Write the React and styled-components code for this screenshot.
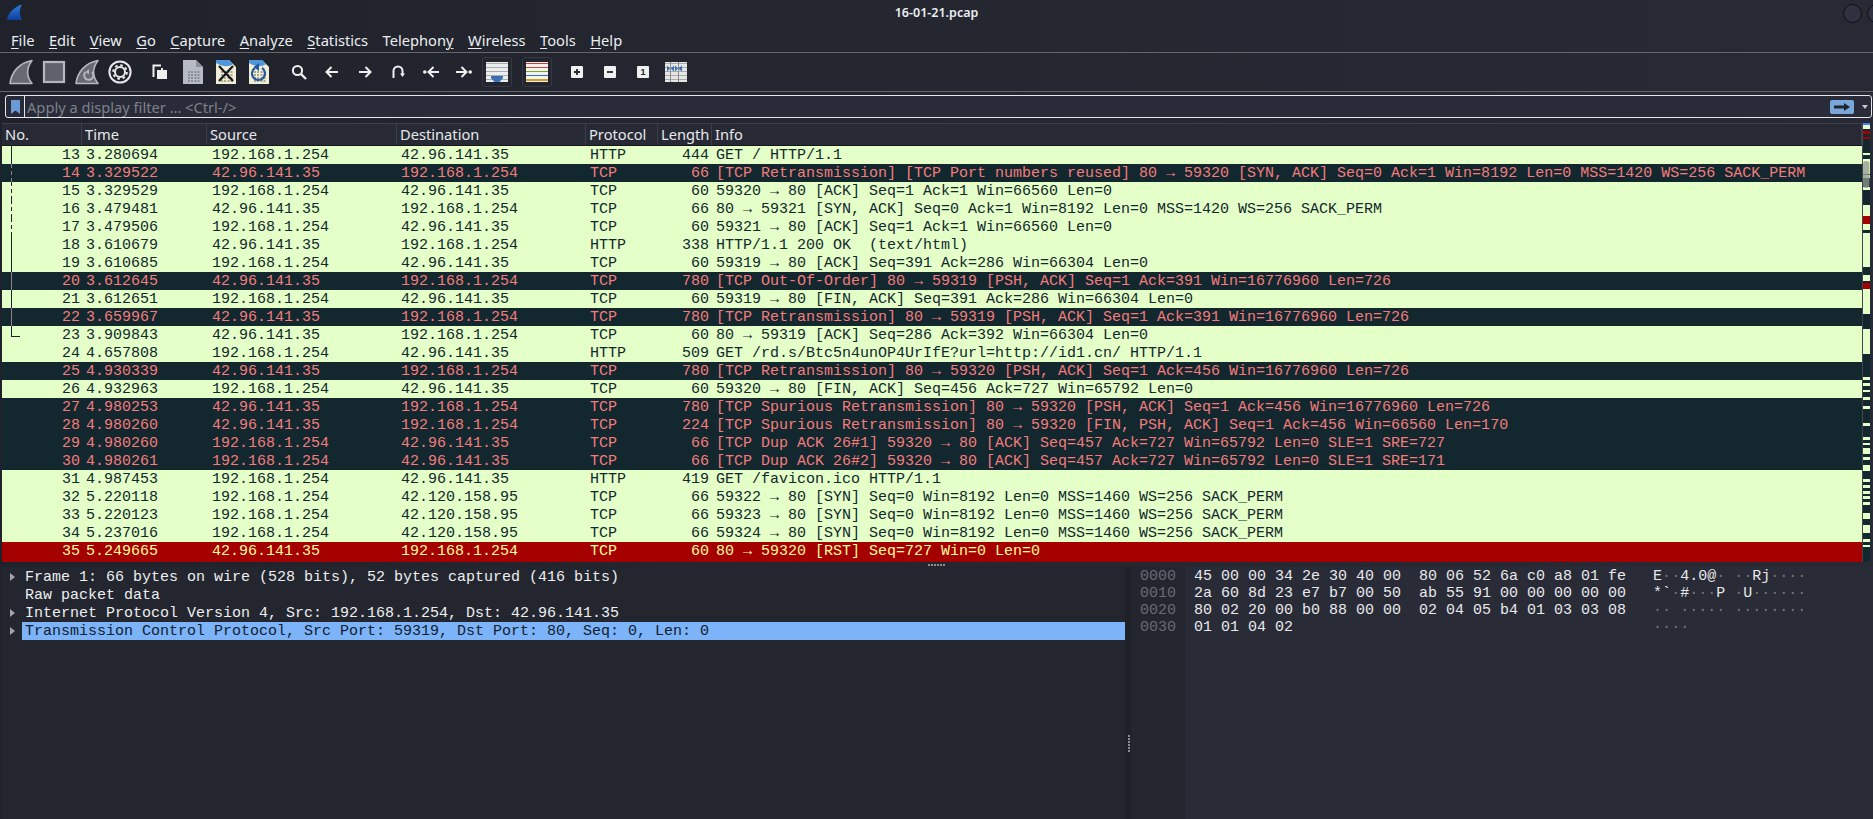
import React from 'react';
import styled, { createGlobalStyle } from 'styled-components';

const MONO = `'Liberation Mono', monospace`;
const UI = `'Noto Sans', sans-serif`;
const COLS = '80px 125px 190px 189px 72px 54px 1fr';

const A = '192.168.1.254';
const B = '42.96.141.35';
const C = '42.120.158.95';

const packets = [
    [13, '3.280694', A, B, 'HTTP', 444, 'GET / HTTP/1.1', 'ok', 'first'],
    [14, '3.329522', B, A, 'TCP', 66, '[TCP Retransmission] [TCP Port numbers reused] 80 → 59320 [SYN, ACK] Seq=0 Ack=1 Win=8192 Len=0 MSS=1420 WS=256 SACK_PERM', 'bad', 'dash'],
    [15, '3.329529', A, B, 'TCP', 60, '59320 → 80 [ACK] Seq=1 Ack=1 Win=66560 Len=0', 'ok', 'dash'],
    [16, '3.479481', B, A, 'TCP', 66, '80 → 59321 [SYN, ACK] Seq=0 Ack=1 Win=8192 Len=0 MSS=1420 WS=256 SACK_PERM', 'ok', 'dash'],
    [17, '3.479506', A, B, 'TCP', 60, '59321 → 80 [ACK] Seq=1 Ack=1 Win=66560 Len=0', 'ok', 'dash'],
    [18, '3.610679', B, A, 'HTTP', 338, 'HTTP/1.1 200 OK  (text/html)', 'ok', 'line'],
    [19, '3.610685', A, B, 'TCP', 60, '59319 → 80 [ACK] Seq=391 Ack=286 Win=66304 Len=0', 'ok', 'line'],
    [20, '3.612645', B, A, 'TCP', 780, '[TCP Out-Of-Order] 80 → 59319 [PSH, ACK] Seq=1 Ack=391 Win=16776960 Len=726', 'bad', 'line'],
    [21, '3.612651', A, B, 'TCP', 60, '59319 → 80 [FIN, ACK] Seq=391 Ack=286 Win=66304 Len=0', 'ok', 'line'],
    [22, '3.659967', B, A, 'TCP', 780, '[TCP Retransmission] 80 → 59319 [PSH, ACK] Seq=1 Ack=391 Win=16776960 Len=726', 'bad', 'line'],
    [23, '3.909843', B, A, 'TCP', 60, '80 → 59319 [ACK] Seq=286 Ack=392 Win=66304 Len=0', 'ok', 'last'],
    [24, '4.657808', A, B, 'HTTP', 509, 'GET /rd.s/Btc5n4unOP4UrIfE?url=http://id1.cn/ HTTP/1.1', 'ok'],
    [25, '4.930339', B, A, 'TCP', 780, '[TCP Retransmission] 80 → 59320 [PSH, ACK] Seq=1 Ack=456 Win=16776960 Len=726', 'bad'],
    [26, '4.932963', A, B, 'TCP', 60, '59320 → 80 [FIN, ACK] Seq=456 Ack=727 Win=65792 Len=0', 'ok'],
    [27, '4.980253', B, A, 'TCP', 780, '[TCP Spurious Retransmission] 80 → 59320 [PSH, ACK] Seq=1 Ack=456 Win=16776960 Len=726', 'bad'],
    [28, '4.980260', B, A, 'TCP', 224, '[TCP Spurious Retransmission] 80 → 59320 [FIN, PSH, ACK] Seq=1 Ack=456 Win=66560 Len=170', 'bad'],
    [29, '4.980260', A, B, 'TCP', 66, '[TCP Dup ACK 26#1] 59320 → 80 [ACK] Seq=457 Ack=727 Win=65792 Len=0 SLE=1 SRE=727', 'bad'],
    [30, '4.980261', A, B, 'TCP', 66, '[TCP Dup ACK 26#2] 59320 → 80 [ACK] Seq=457 Ack=727 Win=65792 Len=0 SLE=1 SRE=171', 'bad'],
    [31, '4.987453', A, B, 'HTTP', 419, 'GET /favicon.ico HTTP/1.1', 'ok'],
    [32, '5.220118', A, C, 'TCP', 66, '59322 → 80 [SYN] Seq=0 Win=8192 Len=0 MSS=1460 WS=256 SACK_PERM', 'ok'],
    [33, '5.220123', A, C, 'TCP', 66, '59323 → 80 [SYN] Seq=0 Win=8192 Len=0 MSS=1460 WS=256 SACK_PERM', 'ok'],
    [34, '5.237016', A, C, 'TCP', 66, '59324 → 80 [SYN] Seq=0 Win=8192 Len=0 MSS=1460 WS=256 SACK_PERM', 'ok'],
    [35, '5.249665', B, A, 'TCP', 60, '80 → 59320 [RST] Seq=727 Win=0 Len=0', 'rst'],
];

const hexLines = [
    ['0000', '45 00 00 34 2e 30 40 00  80 06 52 6a c0 a8 01 fe', 'E··4.0@· ··Rj····'],
    ['0010', '2a 60 8d 23 e7 b7 00 50  ab 55 91 00 00 00 00 00', '*`·#···P ·U······'],
    ['0020', '80 02 20 00 b0 88 00 00  02 04 05 b4 01 03 03 08', '·· ····· ········'],
    ['0030', '01 01 04 02', '····'],
];

const tree = [
    { text: 'Frame 1: 66 bytes on wire (528 bits), 52 bytes captured (416 bits)', arrow: true },
    { text: 'Raw packet data' },
    { text: 'Internet Protocol Version 4, Src: 192.168.1.254, Dst: 42.96.141.35', arrow: true },
    { text: 'Transmission Control Protocol, Src Port: 59319, Dst Port: 80, Seq: 0, Len: 0', arrow: true, selected: true },
];

const menus = [
    ['', 'F', 'ile'], ['', 'E', 'dit'], ['', 'V', 'iew'], ['', 'G', 'o'], ['', 'C', 'apture'], ['', 'A', 'nalyze'],
    ['', 'S', 'tatistics'], ['Telephon', 'y', ''], ['', 'W', 'ireless'], ['', 'T', 'ools'], ['', 'H', 'elp'],
];

// light stretches and red marks of the scroll map, in px from the top of the bar
const mapLight = [[2, 4], [30, 2], [36, 15], [52, 3], [64, 3], [82, 11], [101, 6], [110, 34], [152, 6], [162, 29],
    [206, 25], [254, 3], [260, 3], [267, 2], [274, 3], [283, 3], [300, 3], [314, 3], [320, 2], [325, 6], [334, 3], [342, 6],
    [356, 3], [362, 3], [368, 3], [373, 3], [379, 3], [390, 6], [402, 8], [416, 3], [422, 2]];
const mapRed = [[8, 3], [14, 2], [93, 8], [160, 6]];

const GlobalStyle = createGlobalStyle`
    html, body {
        margin: 0;
        padding: 0;
        background: #22252d;
    }
`;

const Page = styled.div`
    display: flex;
    flex-direction: column;
    width: 100%;
    height: 100vh;
    overflow: hidden;
    color: #eceef2;
    font-family: ${UI};
    background: linear-gradient(90deg, #1f222a 0%, #23262e 35%, #272a35 100%);
`;

const TitleBar = styled.div`
    position: relative;
    display: flex;
    align-items: center;
    justify-content: center;
    height: 30px;
    padding-bottom: 6px;
    box-sizing: border-box;
    font-size: 12.5px;
    font-weight: 600;
`;

const Logo = styled.svg`
    position: absolute;
    left: 6px;
    top: 4px;
`;

const WindowButton = styled.span`
    position: absolute;
    top: 4px;
    left: ${(p) => p.$left}px;
    width: 17px;
    height: 17px;
    border-radius: 50%;
    background: #2e3240;
    border: 1px solid #0d0e12;
`;

const MenuBar = styled.div`
    display: flex;
    height: 19px;
    padding: 0 0 3px 4px;
    align-items: center;
    border-bottom: 1px solid #66676e;
`;

const MenuItem = styled.span`
    padding: 0 7px;
    margin-right: 0.5px;
    font-size: 14.67px;
    line-height: 20px;

    u {
        text-underline-offset: 2px;
        text-decoration-thickness: 1px;
    }
`;

const Toolbar = styled.div`
    display: flex;
    align-items: center;
    height: 38px;
    padding-left: 4.5px;
    border-bottom: 1px solid #66676e;
`;

const ToolButton = styled.div`
    display: flex;
    align-items: center;
    justify-content: center;
    width: 33px;
    height: 38px;
    flex: none;
`;

const CheckedBox = styled.div`
    display: flex;
    align-items: center;
    justify-content: center;
    width: 28px;
    height: 28px;
    border: 1px solid #363945;
    border-radius: 3px;
    background: #23262f;
`;

const ToolSep = styled.div`
    width: 7px;
    flex: none;
`;

const FilterRow = styled.div`
    padding: 3px 1px 5px 5px;
`;

const FilterBox = styled.div`
    display: flex;
    align-items: center;
    height: 23px;
    box-sizing: border-box;
    border: 1.5px solid #e6e7ea;
    border-radius: 3px;
    background: #292c38;
`;

const Bookmark = styled.div`
    display: flex;
    align-items: center;
    justify-content: center;
    width: 18px;
    height: 100%;
    border-right: 1px solid #e6e7ea;
`;

const FilterInput = styled.div`
    flex: 1;
    padding-left: 2px;
    font-size: 14.67px;
    line-height: 20px;
    color: #7e818a;
`;

const ApplyButton = styled.div`
    display: flex;
    align-items: center;
    justify-content: center;
    width: 24px;
    height: 14px;
    border-radius: 2px;
    background: #7aa7da;
`;

const FilterCaret = styled.div`
    width: 0;
    height: 0;
    margin: 0 3px 0 8px;
    border-left: 3.5px solid transparent;
    border-right: 3.5px solid transparent;
    border-top: 4px solid #c6c7cb;
`;

const TableArea = styled.div`
    display: flex;
    padding-left: 2px;
    height: 439px;
    flex: none;
`;

const PacketList = styled.div`
    width: 1860px;
    flex: none;
`;

const HeaderRow = styled.div`
    display: grid;
    grid-template-columns: ${COLS};
    height: 23px;
    box-sizing: border-box;
    border-top: 1px solid #3c3f49;
    border-bottom: 1px solid #14161b;
    background: #272a35;
`;

const HeaderCell = styled.div`
    padding-left: 3px;
    font-size: 14.67px;
    line-height: 21px;
    color: #e6e8ec;
    border-right: 1px solid #3c3f49;
    white-space: nowrap;
    overflow: hidden;
`;

const rowColors = {
    ok: 'background: #e4ffc7; color: #12272e;',
    bad: 'background: #12272e; color: #f47c7c;',
    rst: 'background: #a40000; color: #fffc9c;',
};

const Row = styled.div`
    display: grid;
    grid-template-columns: ${COLS};
    height: ${(p) => (p.$kind === 'rst' ? 20 : 18)}px;
    font-family: ${MONO};
    font-size: 15px;
    line-height: 19px;
    white-space: pre;
    ${(p) => rowColors[p.$kind]}
`;

const Cell = styled.div`
    padding-left: 4px;
    overflow: hidden;
`;

const SourceCell = styled(Cell)`
    padding-left: 5px;
`;

const NumCell = styled.div`
    position: relative;
    text-align: right;
    padding-right: ${(p) => p.$pad}px;
`;

const threadKinds = {
    first: 'top: 0; bottom: 0; background: currentColor;',
    line: 'top: 0; bottom: 0; background: currentColor;',
    dash: 'top: 0; bottom: 0; background: repeating-linear-gradient(180deg, currentColor 0 4px, transparent 4px 7px);',
    last: 'top: 0; bottom: 8px; background: currentColor;',
};

const Thread = styled.span`
    position: absolute;
    left: 9px;
    width: 1px;
    color: ${(p) => (p.$dim ? '#9a8086' : '#12272e')};
    ${(p) => threadKinds[p.$kind]}
`;

const ThreadHook = styled.span`
    position: absolute;
    left: 9px;
    bottom: 8px;
    width: 9px;
    height: 1px;
    background: #12272e;
`;

const ScrollMap = styled.svg`
    flex: none;
    display: block;
`;

const SplitH = styled.div`
    display: flex;
    justify-content: center;
    height: 5px;
    flex: none;
    padding-top: 1.5px;
    box-sizing: border-box;
`;

const GripDots = styled.span`
    width: ${(p) => (p.$vertical ? 2 : 17)}px;
    height: ${(p) => (p.$vertical ? 17 : 2)}px;
    background: repeating-linear-gradient(
        ${(p) => (p.$vertical ? '180deg' : '90deg')},
        #8a8c92 0 2px,
        transparent 2px 3px
    );
`;

const Panes = styled.div`
    display: flex;
    flex: 1;
    min-height: 0;
    padding-left: 2px;
`;

const DetailPane = styled.div`
    width: 1123px;
    flex: none;
    padding-top: 1px;
    box-sizing: border-box;
    background: #23262e;
`;

const TreeRow = styled.div`
    display: flex;
    align-items: center;
    height: 18px;
`;

const TreeArrow = styled.span`
    width: 20px;
    flex: none;
    display: flex;
    justify-content: center;
    padding-left: 1px;
    box-sizing: border-box;

    &::before {
        content: '';
        visibility: ${(p) => (p.$show ? 'visible' : 'hidden')};
        border-top: 4px solid transparent;
        border-bottom: 4px solid transparent;
        border-left: 5px solid #a2a4a9;
    }
`;

const TreeText = styled.span`
    flex: 1;
    height: 18px;
    padding-left: 3px;
    font-family: ${MONO};
    font-size: 15px;
    line-height: 19px;
    white-space: pre;
    color: ${(p) => (p.$selected ? '#10202e' : '#eceef2')};
    background: ${(p) => (p.$selected ? '#7db3f8' : 'transparent')};
`;

const SplitV = styled.div`
    display: flex;
    align-items: center;
    justify-content: flex-end;
    width: 6px;
    flex: none;
    box-sizing: border-box;
    padding: 100px 1px 0 0;
    background: #1f2128;
`;

const HexPane = styled.div`
    display: flex;
    flex: 1;
    background: #292c37;
`;

const OffsetCol = styled.div`
    width: 54px;
    flex: none;
    padding: 1px 0 0 9px;
    box-sizing: border-box;
    background: #23262e;
`;

const DataCol = styled.div`
    padding: 1px 0 0 9px;
`;

const HexLine = styled.div`
    height: 17px;
    font-family: ${MONO};
    font-size: 15px;
    line-height: 17px;
    white-space: pre;
    color: ${(p) => (p.$muted ? '#686b74' : '#e8e9ec')};
`;

const DimDot = styled.span`
    color: #73767e;
`;

const Fin = ({ children }) => (
    <svg width="24" height="26" viewBox="0 0 24 26">
        <path d="M1 24.5C2.5 13 10 4 23 1.5C17.5 9 17 17 23 24.5Z" fill="#676a73" stroke="#b5b7bc" strokeWidth="1.6" strokeLinejoin="round" />
        {children}
    </svg>
);

const StopIcon = () => (
    <svg width="24" height="24" viewBox="0 0 24 24">
        <rect x="2" y="2" width="20" height="20" fill="#5f626c" stroke="#b5b7bc" strokeWidth="2.2" />
    </svg>
);

const GearIcon = () => (
    <svg width="24" height="24" viewBox="0 0 24 24" fill="none" stroke="#e8e8ea">
        <circle cx="12" cy="12" r="10.6" strokeWidth="2" />
        <circle cx="12" cy="12" r="5" strokeWidth="2" />
        <circle cx="12" cy="12" r="6.8" strokeWidth="2" strokeDasharray="2.6 2.74" />
    </svg>
);

const OpenIcon = () => (
    <svg width="16" height="16" viewBox="0 0 16 16">
        <path d="M1.5 13V1.5H9" fill="none" stroke="#f0f0f0" strokeWidth="2" />
        <path d="M5 6H9V4H11V6H15V15H5Z" fill="#efefef" />
    </svg>
);

const DocBits = ({ color }) => (
    <g fill={color}>
        {[11, 14, 17, 20].map((y) => [5, 8, 11.5, 14.5].map((x) => (
            <rect key={`${x}-${y}`} x={x} y={y} width="2" height="2" />
        )))}
    </g>
);

const FileIcon = () => (
    <svg width="20" height="24" viewBox="0 0 20 24">
        <path d="M0 0H13L20 7V24H0Z" fill="#b7bbc6" />
        <path d="M13 0L20 7H13Z" fill="#8d919c" />
        <DocBits color="#8a8e9a" />
    </svg>
);

const CloseIcon = () => (
    <svg width="20" height="24" viewBox="0 0 20 24">
        <path d="M0 0H13L20 7V24H0Z" fill="#f1eed8" />
        <path d="M0 0H13L17 4C12 8 5 6 0 3Z" fill="#4f96dc" />
        <DocBits color="#a9a88f" />
        <path d="M3 6L17 21M17 6L3 21" stroke="#15161a" strokeWidth="2.2" />
    </svg>
);

const ReloadIcon = () => (
    <svg width="20" height="24" viewBox="0 0 20 24">
        <path d="M0 0H13L20 7V24H0Z" fill="#f1eed8" />
        <path d="M0 0H13L17 4C12 8 5 6 0 3Z" fill="#4f96dc" />
        <DocBits color="#a9a88f" />
        <path d="M6 8A6.5 6.5 0 1 0 13 8" fill="none" stroke="#24579e" strokeWidth="2.2" />
        <path d="M10 3V11L4.5 7Z" fill="#24579e" />
    </svg>
);

const SearchIcon = () => (
    <svg width="16" height="16" viewBox="0 0 16 16" fill="none" stroke="#f0f0f0" strokeWidth="2">
        <circle cx="6.5" cy="6.5" r="4.6" />
        <path d="M10 10L15 15" strokeWidth="2.4" />
    </svg>
);

const Arrow = ({ flip }) => (
    <svg width="14" height="14" viewBox="0 0 14 14" fill="none" stroke="#f0f0f0" strokeWidth="2" style={flip ? { transform: 'scaleX(-1)' } : undefined}>
        <path d="M1 7H12M7.5 2L12.5 7L7.5 12" />
    </svg>
);

const JumpIcon = () => (
    <svg width="14" height="14" viewBox="0 0 14 14" fill="none" stroke="#f0f0f0" strokeWidth="2">
        <path d="M2.5 13V6A4.5 4.5 0 0 1 11.5 6V9" />
        <path d="M9 8.5H14L11.5 12Z" fill="#f0f0f0" stroke="none" />
    </svg>
);

const EdgeIcon = ({ flip }) => (
    <svg width="16" height="14" viewBox="0 0 16 14" fill="none" stroke="#f0f0f0" strokeWidth="2" style={flip ? { transform: 'scaleX(-1)' } : undefined}>
        <path d="M6 7H16M10.5 2L5.5 7L10.5 12" />
        <circle cx="1.8" cy="7" r="1.8" fill="#f0f0f0" stroke="none" />
    </svg>
);

const stripes = [1, 5, 9, 13, 17];

const AutoScrollIcon = () => (
    <svg width="22" height="20" viewBox="0 0 22 20">
        <rect width="22" height="20" fill="#eceded" />
        {stripes.map((y) => <rect key={y} y={y} width="22" height="1" fill="#a9aaac" />)}
        <path d="M5 14H17V16L13.5 20H8.5L5 16Z" fill="#3d6fb5" />
    </svg>
);

const ColorizeIcon = () => (
    <svg width="22" height="20" viewBox="0 0 22 20">
        <rect width="22" height="20" fill="#f2f2ef" />
        <rect y="1" width="22" height="1" fill="#d43a3a" />
        <rect y="5" width="22" height="1" fill="#c9433f" />
        <rect y="9" width="22" height="1" fill="#76a832" />
        <rect y="13" width="22" height="1" fill="#3d6fb5" />
        <rect y="17" width="22" height="2" fill="#c9a227" />
    </svg>
);

const SquareKey = ({ children }) => (
    <svg width="12" height="12" viewBox="0 0 12 12">
        <rect width="12" height="12" rx="1" fill="#f0f0f0" />
        {children}
    </svg>
);

const ResizeIcon = () => (
    <svg width="22" height="20" viewBox="0 0 22 20">
        <rect width="22" height="20" fill="#e6e6e4" />
        {stripes.map((y) => <rect key={y} y={y} width="22" height="1" fill="#a9aaac" />)}
        <rect x="5" width="1" height="20" fill="#8b8c8e" />
        <rect x="13" width="1" height="20" fill="#8b8c8e" />
        <path d="M2 3.5L5 6.5L2 9.5ZM9 3.5L5.8 6.5L9 9.5Z" fill="#3d6fb5" />
        <path d="M13.2 6.5L17 3.5V9.5Z" fill="#3d6fb5" />
        <path d="M10 3.5L13 6.5L10 9.5Z" fill="#3d6fb5" />
    </svg>
);

const tools = [
    <Fin key="a" />,
    <StopIcon key="b" />,
    <Fin key="c">
        <path d="M10.5 13A4.6 4.6 0 1 0 17 13" fill="none" stroke="#b5b7bc" strokeWidth="2" />
        <path d="M14 10V15.5L10.5 13Z" fill="#b5b7bc" />
    </Fin>,
    <GearIcon key="d" />,
    null,
    <OpenIcon key="e" />,
    <FileIcon key="f" />,
    <CloseIcon key="g" />,
    <ReloadIcon key="h" />,
    null,
    <SearchIcon key="i" />,
    <Arrow key="j" flip />,
    <Arrow key="k" />,
    <JumpIcon key="l" />,
    <EdgeIcon key="m" />,
    <EdgeIcon key="n" flip />,
    <CheckedBox key="o"><AutoScrollIcon /></CheckedBox>,
    null,
    <CheckedBox key="p"><ColorizeIcon /></CheckedBox>,
    null,
    <SquareKey key="q"><path d="M3 6H9M6 3V9" stroke="#22242b" strokeWidth="1.8" /></SquareKey>,
    <SquareKey key="r"><path d="M3 6H9" stroke="#22242b" strokeWidth="1.8" /></SquareKey>,
    <SquareKey key="s">
        <text x="6" y="9.4" textAnchor="middle" fontSize="9" fontWeight="700" fontFamily="'Liberation Sans', sans-serif" fill="#22242b">1</text>
    </SquareKey>,
    <ResizeIcon key="t" />,
];

const columns = ['No.', 'Time', 'Source', 'Destination', 'Protocol', 'Length', 'Info'];

const MapBar = () => (
    <ScrollMap width="9" height="439" viewBox="0 0 9 439">
        <rect width="9" height="439" fill="#292c35" />
        <rect x="0" width="1" height="439" fill="#44464e" />
        <rect x="1" width="7" height="439" fill="#12272e" />
        <rect x="1" width="7" height="2" fill="#3d7dff" />
        {mapLight.map(([y, h]) => <rect key={y} x="1" y={y} width="7" height={h} fill="#e4ffc7" />)}
        {mapRed.map(([y, h]) => <rect key={y} x="1" y={y} width="7" height={h} fill="#a40000" />)}
        <rect x="1" y="38" width="6.4" height="27" rx="3" fill="#8f9a90" fillOpacity="0.75" />
    </ScrollMap>
);

const AsciiText = ({ value }) => [...value].map((ch, i) => (
    ch === '·' ? <DimDot key={i}>·</DimDot> : ch
));

const App = () => {
    return (
        <Page>
            <GlobalStyle />

            <TitleBar>
                <Logo width="17" height="18" viewBox="0 0 17 18">
                    <defs>
                        <linearGradient id="fin" x1="0" y1="0" x2="0" y2="1">
                            <stop offset="0" stopColor="#2f7be0" />
                            <stop offset="1" stopColor="#0f3f9c" />
                        </linearGradient>
                    </defs>
                    <path d="M1 16C2 9 8 3 16 0.5C13 6 13 11 16 16Z" fill="url(#fin)" />
                </Logo>
                16-01-21.pcap
                <WindowButton $left={1843} />
                <WindowButton $left={1867} />
            </TitleBar>

            <MenuBar>
                {menus.map(([before, key, after]) => (
                    <MenuItem key={key + after}>
                        {before}<u>{key}</u>{after}
                    </MenuItem>
                ))}
            </MenuBar>

            <Toolbar>
                {tools.map((icon, i) => (
                    icon ? <ToolButton key={i}>{icon}</ToolButton> : <ToolSep key={i} />
                ))}
            </Toolbar>

            <FilterRow>
                <FilterBox>
                    <Bookmark>
                        <svg width="9" height="14" viewBox="0 0 9 14">
                            <path d="M0 0H9V14L4.5 10.5L0 14Z" fill="#6b9bd6" />
                        </svg>
                    </Bookmark>
                    <FilterInput>Apply a display filter … &lt;Ctrl-/&gt;</FilterInput>
                    <ApplyButton>
                        <svg width="16" height="8" viewBox="0 0 16 8">
                            <path d="M0 2.4H10V0L16 4L10 8V5.6H0Z" fill="#22252f" />
                        </svg>
                    </ApplyButton>
                    <FilterCaret />
                </FilterBox>
            </FilterRow>

            <TableArea>
                <PacketList>
                    <HeaderRow>
                        {columns.map((name) => <HeaderCell key={name}>{name}</HeaderCell>)}
                    </HeaderRow>

                    {packets.map(([no, time, src, dst, proto, len, info, kind, thread]) => (
                        <Row key={no} $kind={kind}>
                            <NumCell $pad={2}>
                                {thread && <Thread $kind={thread} $dim={kind === 'bad'} />}
                                {thread === 'last' && <ThreadHook />}
                                {no}
                            </NumCell>
                            <Cell>{time}</Cell>
                            <SourceCell>{src}</SourceCell>
                            <Cell>{dst}</Cell>
                            <Cell>{proto}</Cell>
                            <NumCell $pad={3}>{len}</NumCell>
                            <Cell>{info}</Cell>
                        </Row>
                    ))}
                </PacketList>

                <MapBar />
            </TableArea>

            <SplitH>
                <GripDots />
            </SplitH>

            <Panes>
                <DetailPane>
                    {tree.map((item) => (
                        <TreeRow key={item.text}>
                            <TreeArrow $show={item.arrow} />
                            <TreeText $selected={item.selected}>{item.text}</TreeText>
                        </TreeRow>
                    ))}
                </DetailPane>

                <SplitV>
                    <GripDots $vertical />
                </SplitV>

                <HexPane>
                    <OffsetCol>
                        {hexLines.map(([offset]) => <HexLine key={offset} $muted>{offset}</HexLine>)}
                    </OffsetCol>

                    <DataCol>
                        {hexLines.map(([offset, bytes, ascii]) => (
                            <HexLine key={offset}>
                                {bytes.padEnd(48, ' ')}{'   '}<AsciiText value={ascii} />
                            </HexLine>
                        ))}
                    </DataCol>
                </HexPane>
            </Panes>
        </Page>
    );
};

export default App;
